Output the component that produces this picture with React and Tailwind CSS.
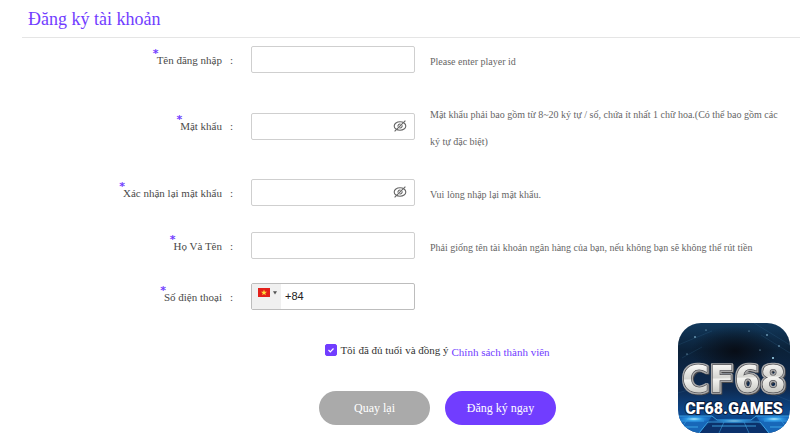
import React, { useState } from 'react';

function Field({ id, label, hint, children }) {
  return (
    <div className="flex items-center">
      <label htmlFor={id} className="w-[200px] shrink-0 text-right text-[11px] leading-4 text-[#4a4a4a]">
        <span className="relative">
          <span className="absolute -top-2 right-full -mr-0.5 font-['DejaVu_Sans',sans-serif] text-[11px] font-bold leading-4 text-[#713dff]">*</span>
          {label}
        </span>
      </label>
      <span className="w-[29px] shrink-0 pl-2 text-[11px] leading-4 text-[#4a4a4a]">:</span>
      <div className="relative w-[164px] shrink-0">{children}</div>
      <p className="ml-[15px] min-w-0 flex-1 pr-3 pt-1 text-[10px] leading-[27px] text-[#666]">{hint}</p>
    </div>
  );
}

function EyeOffIcon() {
  return (
    <svg viewBox="0 0 14 12" className="h-3 w-3.5" fill="none" stroke="#666" strokeWidth="1.1">
      <ellipse cx="7" cy="6" rx="5.8" ry="4.3" />
      <path d="M9 5.2A2 2 0 0 1 6.4 7.8M5 6.6A2 2 0 0 1 7.6 4.2" />
      <path d="M12.4 .6 1.6 11.4" />
    </svg>
  );
}

const inputClass = 'block h-[27px] w-full rounded-xs border border-[#cfcfcf] bg-white px-2 text-[11px] outline-none';

function PasswordInput({ id }) {
  const [visible, setVisible] = useState(false);
  return (
    <>
      <input id={id} type={visible ? 'text' : 'password'} className={inputClass} />
      <button
        type="button"
        aria-label="Hiện mật khẩu"
        onClick={() => setVisible(!visible)}
        className="absolute right-2 top-[7px]"
      >
        <EyeOffIcon />
      </button>
    </>
  );
}

function PhoneInput({ id }) {
  return (
    <div className="flex h-[27px] rounded-xs border border-[#bdbdbd] bg-white">
      <button type="button" aria-label="Việt Nam" className="flex w-[29px] items-start gap-[3px] bg-[#f0f0f0] pl-1.5 pt-1">
        <svg viewBox="0 0 12 9" className="h-[9px] w-3">
          <rect width="12" height="9" fill="#e3201b" />
          <path d="M6 1.6 6.8 3.7 9 3.8 7.2 5.2 7.9 7.3 6 6.1 4.1 7.3 4.8 5.2 3 3.8 5.2 3.7Z" fill="#ffdf3d" />
        </svg>
        <svg viewBox="0 0 4 9" className="h-[9px] w-1">
          <path d="M0 3.2H4L2 6.4Z" fill="#555" />
        </svg>
      </button>
      <input
        id={id}
        type="tel"
        defaultValue="+84"
        className="min-w-0 flex-1 bg-transparent pl-1 font-['Liberation_Sans',sans-serif] text-[11px] text-[#222] outline-none"
      />
    </div>
  );
}

function Logo() {
  return (
    <svg viewBox="0 0 112 110" className="h-[110px] w-28" role="img" aria-label="CF68.GAMES">
      <defs>
        <linearGradient id="sky" x1="0" y1="0" x2="0" y2="1">
          <stop offset="0" stopColor="#12395c" />
          <stop offset=".25" stopColor="#0b2138" />
          <stop offset=".6" stopColor="#0e2a50" />
          <stop offset=".82" stopColor="#0c4a91" />
          <stop offset="1" stopColor="#082c66" />
        </linearGradient>
        <linearGradient id="steel" x1="0" y1="0" x2=".08" y2="1">
          <stop offset=".15" stopColor="#fbfbf9" />
          <stop offset=".48" stopColor="#d6d6d2" />
          <stop offset=".52" stopColor="#f3f3f0" />
          <stop offset=".9" stopColor="#c2c2bd" />
        </linearGradient>
        <radialGradient id="dark">
          <stop offset="0" stopColor="#080d16" />
          <stop offset="1" stopColor="#080d16" stopOpacity="0" />
        </radialGradient>
        <radialGradient id="glow">
          <stop offset="0" stopColor="#b8f0ff" />
          <stop offset=".4" stopColor="#36a8f0" stopOpacity=".8" />
          <stop offset="1" stopColor="#1468c8" stopOpacity="0" />
        </radialGradient>
        <filter id="bevel" x="-10%" y="-20%" width="120%" height="150%">
          <feMorphology in="SourceAlpha" operator="dilate" radius="1.2" result="rimShape" />
          <feFlood floodColor="#aaaaab" />
          <feComposite in2="rimShape" operator="in" result="rim" />
          <feOffset in="rimShape" dx="1" dy="1" result="shadowShape" />
          <feFlood floodColor="#48484c" />
          <feComposite in2="shadowShape" operator="in" result="shadow" />
          <feMerge>
            <feMergeNode in="shadow" />
            <feMergeNode in="rim" />
            <feMergeNode in="SourceGraphic" />
          </feMerge>
        </filter>
        <clipPath id="tile">
          <rect width="112" height="110" rx="23" />
        </clipPath>
      </defs>
      <g clipPath="url(#tile)">
        <rect width="112" height="110" fill="url(#sky)" />
        <ellipse cx="57" cy="28" rx="44" ry="25" fill="url(#dark)" />
        <g stroke="#4b91bd" strokeWidth=".6" opacity=".25">
          <path d="M0 22 34 8M4 35 24 24M76 0 112 22M83 12 112 30M0 70 20 64M92 70 112 78" />
        </g>
        <g fill="#a6dcf5">
          <circle cx="17" cy="14" r=".8" />
          <circle cx="28" cy="7" r=".6" />
          <circle cx="89" cy="12" r=".8" />
          <circle cx="101" cy="23" r=".7" />
          <circle cx="95" cy="35" r="1" />
          <circle cx="9" cy="31" r=".6" />
          <circle cx="82" cy="27" r=".6" />
          <circle cx="71" cy="8" r=".5" />
        </g>
        <path d="M0 93H34L22 110H0ZM112 93H78L90 110H112Z" fill="#1767b8" />
        <path d="M34 98H78L90 110H22Z" fill="#0b316b" />
        <g fill="none" stroke="#46b5f0" strokeWidth=".8">
          <path d="M0 93H34L39 97H73L78 93H112M30 99H82L91 110M30 99 21 110M34 103H78M0 98H26M86 98H112M4 104H20M92 104H108" />
          <path d="M12 93 4 104M100 93 108 104M46 99 41 110M66 99 71 110" opacity=".6" />
        </g>
        <ellipse cx="16" cy="96" rx="19" ry="4" fill="url(#glow)" />
        <ellipse cx="96" cy="96" rx="19" ry="4" fill="url(#glow)" />
        <ellipse cx="56" cy="98" rx="26" ry="3" fill="url(#glow)" opacity=".7" />
      </g>
      <text
        x="56"
        y="69"
        textAnchor="middle"
        fontFamily="'DejaVu Sans', sans-serif"
        fontWeight="700"
        fontSize="37"
        fill="url(#steel)"
        stroke="#45454a"
        strokeWidth="1.4"
        strokeLinejoin="round"
        paintOrder="stroke"
        filter="url(#bevel)"
      >
        CF68
      </text>
      <text
        x="56"
        y="91"
        textAnchor="middle"
        fontFamily="Roboto, sans-serif"
        fontWeight="900"
        fontSize="16"
        fill="#fff"
        stroke="#0a1c3c"
        strokeWidth="2"
        paintOrder="stroke"
      >
        CF68.GAMES
      </text>
    </svg>
  );
}

export default function App() {
  const [agreed, setAgreed] = useState(true);

  return (
    <main className="relative bg-white pl-[22px] font-['Liberation_Serif',serif]">
      <h1 className="border-b border-[#e5e5e5] pb-1 pl-1.5 pt-1.5 text-[18px] leading-[27px] text-[#713dff]">
        Đăng ký tài khoản
      </h1>

      <form onSubmit={(e) => e.preventDefault()}>
        <div className="flex flex-col gap-[22px] pt-1.5">
          <Field id="username" label="Tên đăng nhập" hint="Please enter player id">
            <input id="username" type="text" className={inputClass} />
          </Field>
          <Field
            id="password"
            label="Mật khẩu"
            hint="Mật khẩu phải bao gồm từ 8~20 ký tự / số, chứa ít nhất 1 chữ hoa.(Có thể bao gồm các ký tự đặc biệt)"
          >
            <PasswordInput id="password" />
          </Field>
          <Field id="confirm" label="Xác nhận lại mật khẩu" hint="Vui lòng nhập lại mật khẩu.">
            <PasswordInput id="confirm" />
          </Field>
          <Field
            id="fullname"
            label="Họ Và Tên"
            hint="Phải giống tên tài khoản ngân hàng của bạn, nếu không bạn sẽ không thể rút tiền"
          >
            <input id="fullname" type="text" className={inputClass} />
          </Field>
          <Field id="phone" label="Số điện thoại">
            <PhoneInput id="phone" />
          </Field>
        </div>

        <div className="pl-[53px]">
          <div className="flex items-center justify-center pt-[30px] text-[11px] leading-4">
            <label className="flex items-center gap-[3px] text-[#333]">
              <span className="relative flex size-3">
                <input
                  type="checkbox"
                  checked={agreed}
                  onChange={(e) => setAgreed(e.target.checked)}
                  className="peer size-3 appearance-none rounded-xs border border-[#713dff] checked:bg-[#713dff]"
                />
                <svg
                  viewBox="0 0 12 12"
                  className="pointer-events-none absolute inset-0 hidden size-3 peer-checked:block"
                  fill="none"
                  stroke="#fff"
                  strokeWidth="1.2"
                >
                  <path d="M3.5 6 5.3 7.8 8.5 4.5" />
                </svg>
              </span>
              Tôi đã đủ tuổi và đồng ý
            </label>
            <a href="#policy" className="ml-[3px] pt-1 text-[#713dff]">Chính sách thành viên</a>
          </div>

          <div className="flex justify-center gap-[15px] pb-[18px] pt-[31px] text-[12px] text-white">
            <button type="button" className="h-[34px] w-[111px] rounded-full bg-[#aaa]">Quay lại</button>
            <button type="submit" className="h-[34px] w-[111px] rounded-full bg-[#713dff]">Đăng ký ngay</button>
          </div>
        </div>
      </form>

      <div className="absolute bottom-2.5 right-2.5">
        <Logo />
      </div>
    </main>
  );
}
